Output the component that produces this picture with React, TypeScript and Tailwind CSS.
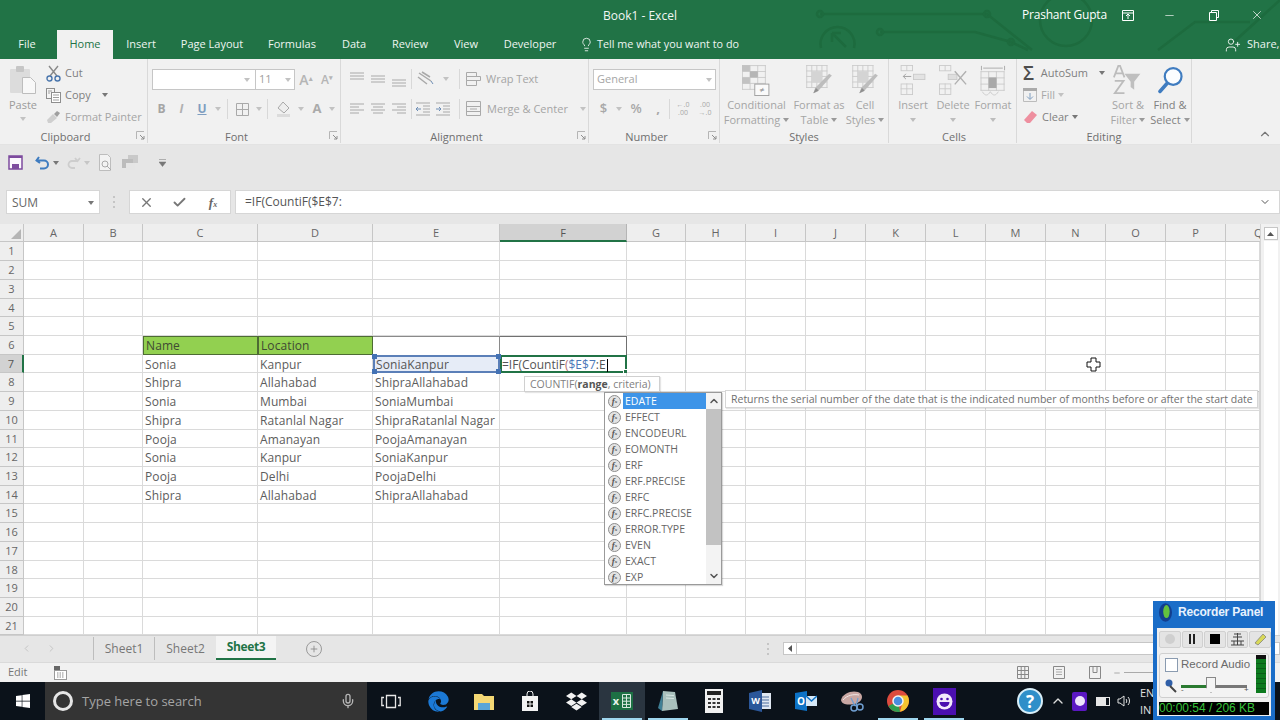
import React from "react";
import { FaWindows, FaEdge, FaDropbox } from "react-icons/fa";
import { Mic, ChevronUp, ChevronDown, ChevronLeft, ChevronRight, Plus, Lightbulb, UserPlus, X, Check, Minus } from "lucide-react";

const G = "#a9a9a9";
const D = "#c9c9c9";

function Caret({ color = "#9a9a9a" }: { color?: string }) {
  return (
    <svg width="6" height="4" viewBox="0 0 6 4" className="shrink-0">
      <path d="M0 0h6L3 4z" fill={color} />
    </svg>
  );
}

function Launcher() {
  return (
    <svg width="9" height="9" viewBox="0 0 9 9" className="absolute right-[2px] bottom-[3px]">
      <path d="M.5 8V.5H8" fill="none" stroke="#b5b5b5" />
      <path d="M4 4l4 4M8 5v3H5" fill="none" stroke="#8e8e8e" />
    </svg>
  );
}

function LinesIcon({ kind }: { kind: "top" | "mid" | "bot" | "left" | "center" | "right" | "outdent" | "indent" }) {
  const rows: Record<string, string> = {
    top: "M2 2h14M2 5h14M2 8h14",
    mid: "M2 5h14M2 8h14M2 11h14",
    bot: "M2 9h14M2 12h14M2 15h14",
    left: "M2 3h14M2 6h9M2 9h14M2 12h9",
    center: "M2 3h14M4 6h10M2 9h14M4 12h10",
    right: "M2 3h14M7 6h9M2 9h14M7 12h9",
    outdent: "M2 2h14M9 5h7M9 8h7M9 11h7M2 14h14",
    indent: "M2 2h14M9 5h7M9 8h7M9 11h7M2 14h14",
  };
  return (
    <svg width="18" height="17" viewBox="0 0 18 17">
      <path d={rows[kind]} stroke={G} fill="none" />
      {kind === "outdent" && <path d="M7 8H2M4 6L2 8l2 2" stroke="#6d8db5" fill="none" />}
      {kind === "indent" && <path d="M2 8h5M5 6l2 2-2 2" stroke="#6d8db5" fill="none" />}
    </svg>
  );
}

function GridIcon({ w, h, cols, rows, color = D }: { w: number; h: number; cols: number; rows: number; color?: string }) {
  const lines = [];
  for (let i = 0; i <= cols; i++) lines.push(<path key={"c" + i} d={`M${0.5 + (i * (w - 1)) / cols} 0V${h}`} stroke={color} />);
  for (let i = 0; i <= rows; i++) lines.push(<path key={"r" + i} d={`M0 ${0.5 + (i * (h - 1)) / rows}H${w}`} stroke={color} />);
  return <>{lines}</>;
}

function CondFormatIcon() {
  return (
    <svg width="30" height="32" viewBox="0 0 34 36">
      <GridIcon w={27} h={28} cols={3} rows={4} />
      <rect x="0" y="0" width="9" height="7" fill="#c2c2c2" />
      <rect x="9" y="7" width="9" height="7" fill="#b5b5b5" />
      <rect x="0" y="14" width="9" height="7" fill="#c2c2c2" />
      <rect x="14.5" y="21.5" width="16" height="13" fill="#fafafa" stroke="#9a9a9a" />
      <text x="22.5" y="32" textAnchor="middle" fontSize="10" fill="#8a8a8a">≠</text>
    </svg>
  );
}

function TableIcon() {
  return (
    <svg width="27" height="30" viewBox="0 0 30 34">
      <GridIcon w={24} h={26} cols={4} rows={4} />
      <rect x="6" y="7" width="12" height="13" fill="#d4d4d4" />
      <path d="M29 12L13 30l-5 2 2-6 16-16z" fill="#bdbdbd" />
      <path d="M8 32l3-6 3 3z" fill="#8f8f8f" />
    </svg>
  );
}

function InsertIcon() {
  return (
    <svg width="26" height="30" viewBox="0 0 28 34">
      <rect x=".5" y=".5" width="13" height="6" fill="none" stroke={D} />
      <path d="M7 .5v6" stroke={D} />
      <rect x=".5" y="21.5" width="13" height="12" fill="none" stroke={D} />
      <path d="M7 21v12M0 27h14" stroke={D} />
      <path d="M12 13H3M6 10l-3 3 3 3" stroke="#9a9a9a" fill="none" />
      <rect x="14.5" y="10.5" width="13" height="6" fill="#e3e3e3" stroke={D} />
    </svg>
  );
}

function DeleteIcon() {
  return (
    <svg width="28" height="30" viewBox="0 0 32 34">
      <rect x=".5" y=".5" width="13" height="6" fill="none" stroke={D} />
      <path d="M7 .5v6" stroke={D} />
      <rect x=".5" y="21.5" width="13" height="12" fill="none" stroke={D} />
      <path d="M7 21v12M0 27h14" stroke={D} />
      <rect x="10.5" y="10.5" width="10" height="6" fill="#dedede" stroke={D} />
      <path d="M18 7l13 15M31 7L18 22" stroke="#b0b0b0" strokeWidth="1.6" />
    </svg>
  );
}

function FormatIcon() {
  return (
    <svg width="26" height="32" viewBox="0 0 28 36">
      <path d="M1 1v5M27 1v5M3 3.500h22" stroke="#a5a5a5" fill="none" />
      <g transform="translate(0 7)">
        <GridIcon w={27} h={22} cols={3} rows={3} />
      </g>
      <rect x="9" y="14" width="9" height="12" fill="#a9a9a9" />
      <path d="M2 30c3 5 6 5 9 0M11 30c3 5 6 5 9 0" stroke={D} fill="none" />
    </svg>
  );
}

function SmallBtn({ label, big, className }: { label: string[]; big: React.ReactNode; className: string }) {
  return (
    <div className={"flex flex-col items-center " + className}>
      <div className="h-[32px] flex items-start justify-center">{big}</div>
      {label.map((l, i) => (
        <div key={i} className="h-[15px] leading-[15px] flex items-center gap-[3px] whitespace-nowrap">
          {l}
          {i === label.length - 1 && label.length === 2 && <Caret />}
        </div>
      ))}
      {label.length === 1 && (
        <div className="h-[15px] flex items-center">
          <Caret color="#bdbdbd" />
        </div>
      )}
    </div>
  );
}

function Sep({ className = "h-[20px]" }: { className?: string }) {
  return <div className={"w-px bg-[#d8d8d8] shrink-0 " + className} />;
}

function Group({ label, className, labelClass = "", launcher, children }: { label: string; className: string; labelClass?: string; launcher?: boolean; children: React.ReactNode }) {
  return (
    <div className={"relative shrink-0 flex flex-col border-r border-[#d9d9d9] mb-[1px] " + className}>
      <div className="flex-1 min-h-0">{children}</div>
      <div className={"h-[12px] leading-[12px] text-center text-[#6f6f6f] " + labelClass}>{label}</div>
      {launcher && <Launcher />}
    </div>
  );
}

function Ribbon() {
  return (
    <div className="h-[86px] bg-[#f1f1f1] flex shrink-0 text-[11px] text-[#9b9b9b] border-b border-[#e3e3e3]">
      <Group label="Clipboard" labelClass="pr-[16px]" launcher className="w-[148px]">
        <div className="flex">
          <div className="w-[46px] shrink-0 pt-[6px] flex flex-col items-center">
            <svg width="28" height="30" viewBox="0 0 28 30">
              <rect x="1" y="4" width="20" height="24" rx="1" fill="#dcdcdc" />
              <rect x="7" y="1" width="8" height="6" rx="1" fill="#c6c6c6" />
              <path d="M13.500 12.500h8l5 5v11h-13z" fill="#f8f8f8" stroke="#bdbdbd" />
            </svg>
            <div className="mt-[2px] leading-[15px]">Paste</div>
            <div className="mt-[5px]"><Caret color="#c2c2c2" /></div>
          </div>
          <div className="flex flex-col text-[#7f7f7f]">
            <div className="h-[22px] mt-[3px] flex items-center gap-[4px]">
              <svg width="15" height="17" viewBox="0 0 15 17">
                <path d="M3 1l8 10M12 1L4 11" stroke="#8a8a8a" strokeWidth="1.4" />
                <circle cx="3.500" cy="13.500" r="2.500" fill="none" stroke="#4a76ad" strokeWidth="1.400" />
                <circle cx="11.500" cy="13.500" r="2.500" fill="none" stroke="#4a76ad" strokeWidth="1.400" />
              </svg>
              Cut
            </div>
            <div className="h-[22px] flex items-center gap-[4px]">
              <svg width="15" height="15" viewBox="0 0 15 15">
                <rect x=".5" y=".5" width="8" height="10" fill="#f5f5f5" stroke="#8e8e8e" />
                <rect x="5.500" y="4.500" width="9" height="10" fill="#fff" stroke="#8e8e8e" />
                <path d="M7 7h6M7 9.500h6M7 12h6M2 3h4M2 5h2" stroke="#9e9e9e" />
              </svg>
              Copy
              <span className="ml-[7px]"><Caret color="#777" /></span>
            </div>
            <div className="h-[22px] flex items-center gap-[4px] text-[#a5a5a5] whitespace-nowrap">
              <svg width="15" height="14" viewBox="0 0 15 14">
                <path d="M1 10l6-6 4 4-6 5H2z" fill="#cfcfcf" />
                <path d="M8 4l3-3 3 2-3 4z" fill="#9f9f9f" />
              </svg>
              Format Painter
            </div>
          </div>
        </div>
      </Group>

      <Group label="Font" labelClass="pr-[19px]" launcher className="w-[193px] pl-[4px]">
        <div className="pt-[10px]">
          <div className="flex items-center h-[21px]">
            <div className="w-[104px] h-full bg-white border border-[#c6c6c6] flex items-center justify-end pr-[5px]">
              <Caret color="#c2c2c2" />
            </div>
            <div className="w-[39px] h-full bg-white border border-l-0 border-[#c6c6c6] flex items-center justify-between px-[3px] text-[#a0a0a0]">
              11
              <Caret color="#c2c2c2" />
            </div>
            <div className="w-[20px] ml-[1px] text-center text-[14px] font-semibold text-[#b5b5b5] leading-none">A<sup className="text-[7px]">▴</sup></div>
            <div className="w-[22px] text-center text-[12px] font-semibold text-[#b5b5b5] leading-none">A<sup className="text-[7px]">▾</sup></div>
          </div>
          <div className="flex items-center h-[20px] mt-[9px] text-[12px] text-[#a5a5a5]">
            <div className="w-[19px] text-center font-bold">B</div>
            <div className="w-[21px] text-center italic font-bold text-[#b0b0b0]">I</div>
            <div className="w-[20px] text-center underline font-bold text-[#7f9ec0] decoration-[#7f9ec0]">U</div>
            <div className="w-[12px] flex justify-center"><Caret color="#c2c2c2" /></div>
            <div className="w-[6px] flex justify-center"><Sep /></div>
            <div className="w-[24px] flex justify-center">
              <svg width="13" height="13" viewBox="0 0 13 13"><path d="M.5.500h12v12H.5zM6.500.500v12M.5 6.500h12" fill="none" stroke={G} /></svg>
            </div>
            <div className="w-[10px] flex justify-center"><Caret color="#c2c2c2" /></div>
            <div className="w-[6px] flex justify-center"><Sep /></div>
            <div className="w-[26px] flex justify-center">
              <svg width="15" height="16" viewBox="0 0 15 16"><path d="M7 1l6 6-5 5-6-5z" fill="#eee" stroke={G} /><rect x="1" y="13" width="13" height="3" fill="#dcdcdc" /></svg>
            </div>
            <div className="w-[10px] flex justify-center"><Caret color="#c2c2c2" /></div>
            <div className="w-[22px] text-center font-bold text-[13px] text-[#aaaaaa]">A</div>
            <div className="w-[8px] flex justify-center"><Caret color="#c2c2c2" /></div>
          </div>
        </div>
      </Group>

      <Group label="Alignment" labelClass="pr-[21px]" launcher className="w-[248px] pl-[5px]">
        <div className="pt-[9px]">
          <div className="flex items-center h-[22px]">
            <div className="w-[21px] flex justify-center"><LinesIcon kind="top" /></div>
            <div className="w-[21px] flex justify-center"><LinesIcon kind="mid" /></div>
            <div className="w-[21px] flex justify-center"><LinesIcon kind="bot" /></div>
            <div className="w-[4px] flex justify-center"><Sep /></div>
            <div className="w-[26px] flex justify-center">
              <svg width="18" height="16" viewBox="0 0 18 16"><path d="M2 2l12 8M1 6l9 7M5 1l8 5" stroke={G} strokeWidth="1.500" fill="none" /><path d="M14 10l2 3" stroke="#6d8db5" /></svg>
            </div>
            <div className="w-[14px] flex justify-center"><Caret color="#c2c2c2" /></div>
            <div className="w-[12px] flex justify-center"><Sep /></div>
            <div className="flex items-center gap-[3px] ml-[1px] text-[11px] text-[#a5a5a5] whitespace-nowrap">
              <svg width="17" height="15" viewBox="0 0 17 15"><path d="M.5.500h10v4H.5zM.5 4.500h14v4H.5zM.5 8.500h10v5H.5z" fill="none" stroke={G} /></svg>
              Wrap Text
            </div>
          </div>
          <div className="flex items-center h-[20px] mt-[9px]">
            <div className="w-[21px] flex justify-center"><LinesIcon kind="left" /></div>
            <div className="w-[21px] flex justify-center"><LinesIcon kind="center" /></div>
            <div className="w-[21px] flex justify-center"><LinesIcon kind="right" /></div>
            <div className="w-[4px] flex justify-center"><Sep /></div>
            <div className="w-[20px] flex justify-center"><LinesIcon kind="outdent" /></div>
            <div className="w-[20px] flex justify-center"><LinesIcon kind="indent" /></div>
            <div className="w-[12px] flex justify-center"><Sep /></div>
            <div className="flex items-center gap-[5px] ml-[1px] text-[11px] text-[#a5a5a5] whitespace-nowrap">
              <svg width="16" height="16" viewBox="0 0 16 16"><path d="M.5.500h14v14H.5zM.5 5.500h14M.5 10.500h14M4 8h7" fill="none" stroke={G} /></svg>
              Merge &amp; Center
              <span className="ml-[7px]"><Caret color="#c2c2c2" /></span>
            </div>
          </div>
        </div>
      </Group>

      <Group label="Number" labelClass="pr-[19px]" launcher className="w-[131px] pl-[4px]">
        <div className="pt-[10px]">
          <div className="w-[123px] h-[21px] bg-white border border-[#c6c6c6] flex items-center justify-between px-[3px] text-[#a5a5a5]">
            General
            <Caret color="#c2c2c2" />
          </div>
          <div className="flex items-center h-[20px] mt-[9px] text-[#a8a8a8]">
            <div className="w-[21px] text-center text-[13px] font-semibold">$</div>
            <div className="w-[9px] flex justify-center"><Caret color="#c2c2c2" /></div>
            <div className="w-[26px] text-center text-[13px] font-semibold">%</div>
            <div className="w-[18px] text-center text-[13px] font-bold">,</div>
            <div className="w-[4px] flex justify-center"><Sep /></div>
            <div className="w-[24px] text-center text-[7px] leading-[8px]">←.0<br />.00</div>
            <div className="w-[20px] text-center text-[7px] leading-[8px]">.00<br />→.0</div>
          </div>
        </div>
      </Group>

      <Group label="Styles" className="w-[169px]">
        <div className="pt-[6px] flex text-[#a5a5a5]">
          <SmallBtn className="w-[73px]" label={["Conditional", "Formatting"]} big={<CondFormatIcon />} />
          <SmallBtn className="w-[52px]" label={["Format as", "Table"]} big={<TableIcon />} />
          <SmallBtn className="w-[40px]" label={["Cell", "Styles"]} big={<TableIcon />} />
        </div>
      </Group>

      <Group label="Cells" className="w-[128px] pl-[3px]">
        <div className="pt-[6px] flex text-[#a5a5a5]">
          <SmallBtn className="w-[42px]" label={["Insert"]} big={<InsertIcon />} />
          <SmallBtn className="w-[38px]" label={["Delete"]} big={<DeleteIcon />} />
          <SmallBtn className="w-[42px]" label={["Format"]} big={<FormatIcon />} />
        </div>
      </Group>

      <Group label="Editing" labelClass="pr-[6px]" className="w-[175px] pl-[6px]">
        <div className="flex">
          <div className="w-[82px] shrink-0 flex flex-col text-[#7f7f7f]">
            <div className="h-[22px] mt-[3px] flex items-center gap-[3px] whitespace-nowrap">
              <span className="text-[19px] leading-none w-[16px] text-[#4d4d4d] font-semibold">Σ</span>
              AutoSum
              <span className="ml-[8px]"><Caret color="#777" /></span>
            </div>
            <div className="h-[22px] flex items-center gap-[3px] text-[#a8a8a8]">
              <svg width="15" height="15" viewBox="0 0 15 15"><path d="M.5.500h13v13H.5z" fill="none" stroke="#bcbcbc" /><rect x="0" y="0" width="14" height="3" fill="#aaa" /><path d="M7 5v6M4 8.500l3 3 3-3" fill="none" stroke="#7f9ec0" /></svg>
              Fill
              <Caret color="#c2c2c2" />
            </div>
            <div className="h-[22px] flex items-center gap-[3px] whitespace-nowrap">
              <svg width="15" height="14" viewBox="0 0 15 14"><path d="M9 1l5 4-7 8H4L1 10z" fill="#ee8f9f" /></svg>
              <span className="ml-[1px]">Clear</span>
              <Caret color="#777" />
            </div>
          </div>
          <div className="pt-[6px] w-[46px]">
            <SmallBtn className="w-[46px] text-[#a5a5a5]" label={["Sort &", "Filter"]} big={
              <svg width="30" height="30" viewBox="0 0 34 34">
                <path d="M1 14L6 1h2l5 13M3.500 9.500h7M2 18h10L2 32h11" fill="none" stroke="#bcbcbc" strokeWidth="2" />
                <path d="M13 10h18l-7 9v9l-4-3v-6z" fill="#bfbfbf" />
              </svg>
            } />
          </div>
          <div className="pt-[6px] w-[38px]">
            <SmallBtn className="w-[38px] text-[#808080]" label={["Find &", "Select"]} big={
              <svg width="27" height="30" viewBox="0 0 30 34">
                <circle cx="18" cy="13" r="9.500" fill="#fbfdff" stroke="#3f7cc0" strokeWidth="2.500" />
                <path d="M11 21L3 30" stroke="#3f7cc0" strokeWidth="4" strokeLinecap="round" />
              </svg>
            } />
          </div>
        </div>
      </Group>

      <div className="flex-1 flex items-end justify-end pr-[8px] pb-[3px]">
        <ChevronUp size={14} className="text-[#777]" />
      </div>
    </div>
  );
}

function QuickAccess() {
  return (
    <div className="h-[35px] shrink-0 flex items-center pl-[8px]">
      <svg width="15" height="15" viewBox="0 0 15 15">
        <path d="M1 1h13v13H1z" fill="#fbf8fd" stroke="#7d4b9e" strokeWidth="1.500" />
        <rect x="1" y="1" width="13" height="2" fill="#7d4b9e" />
        <rect x="4" y="9" width="7" height="5" fill="#7d4b9e" />
      </svg>
      <svg width="15" height="15" viewBox="0 0 15 15" className="ml-[12px]">
        <path d="M4 2L1.500 5.500 5 8M2 5.500h7a4 4 0 0 1 0 8H5" fill="none" stroke="#3f7cc0" strokeWidth="2" />
      </svg>
      <span className="ml-[3px]"><Caret color="#777" /></span>
      <svg width="14" height="13" viewBox="0 0 14 13" className="ml-[8px]">
        <path d="M13 2L10.500 5 8 2M10.500 5H5a3.500 3.500 0 0 0 0 7h3" fill="none" stroke="#cdcdcd" strokeWidth="1.800" />
      </svg>
      <span className="ml-[3px]"><Caret color="#c6c6c6" /></span>
      <svg width="15" height="17" viewBox="0 0 15 17" className="ml-[8px]">
        <path d="M1.500.500h8l3 3v13h-11z" fill="#f3f3f3" stroke="#bdbdbd" />
        <circle cx="7" cy="10" r="3" fill="none" stroke="#aaa" />
        <path d="M9 12l4 4" stroke="#aaa" />
      </svg>
      <svg width="19" height="17" viewBox="0 0 19 17" className="ml-[8px]">
        <rect x="7" y="1" width="10" height="8" fill="#c9c9c9" />
        <rect x="1" y="5" width="11" height="9" fill="#bcbcbc" />
        <rect x="5" y="9" width="9" height="7" fill="#e5e5e5" />
      </svg>
      <svg width="7" height="8" viewBox="0 0 7 8" className="ml-[19px]">
        <path d="M0 .5h7M0 3h7L3.500 7.500z" fill="#777" stroke="#777" strokeWidth=".5" />
      </svg>
    </div>
  );
}

function FormulaBar() {
  return (
    <div className="mt-[10px] h-[24px] shrink-0 flex items-stretch pl-[6px] text-[12px] text-[#666]">
      <div className="w-[94px] bg-white border border-[#d6d6d6] flex items-center justify-between pl-[5px] pr-[5px] pt-px">
        SUM
        <Caret color="#777" />
      </div>
      <div className="w-[29px] flex items-center justify-center">
        <svg width="3" height="12" viewBox="0 0 3 12"><path d="M1 0v2M1 5v2M1 10v2" stroke="#bbb" strokeWidth="1.500" /></svg>
      </div>
      <div className="w-[102px] bg-white border border-[#d6d6d6] flex items-center">
        <div className="w-[32px] flex justify-center"><X size={15} strokeWidth={2.2} className="text-[#777]" /></div>
        <div className="w-[34px] flex justify-center"><Check size={15} strokeWidth={3} className="text-[#777]" /></div>
        <div className="w-[34px] text-center italic font-bold text-[#666] [font-family:'Liberation_Serif',serif] text-[13px] leading-none">f<span className="text-[8px]">x</span></div>
      </div>
      <div className="flex-1 ml-[4px] bg-white border border-[#d6d6d6] flex items-center justify-between pl-[9px] pr-[8px] text-[#555] text-[12px]">
        =IF(CountiF($E$7:
        <ChevronDown size={12} className="text-[#555]" />
      </div>
    </div>
  );
}

const letters = ["A", "B", "C", "D", "E", "F", "G", "H", "I", "J", "K", "L", "M", "N", "O", "P", "Q"];
const rows = Array.from({ length: 21 }, (_, i) => i + 1);
const sheet: Record<number, string[]> = {
  6: ["Name", "Location"],
  7: ["Sonia", "Kanpur", "SoniaKanpur"],
  8: ["Shipra", "Allahabad", "ShipraAllahabad"],
  9: ["Sonia", "Mumbai", "SoniaMumbai"],
  10: ["Shipra", "Ratanlal Nagar", "ShipraRatanlal Nagar"],
  11: ["Pooja", "Amanayan", "PoojaAmanayan"],
  12: ["Sonia", "Kanpur", "SoniaKanpur"],
  13: ["Pooja", "Delhi", "PoojaDelhi"],
  14: ["Shipra", "Allahabad", "ShipraAllahabad"],
};

function Handle({ className }: { className: string }) {
  return <div className={"absolute w-[5px] h-[5px] bg-[#4472b4] " + className} />;
}

function Cell({ r, c }: { r: number; c: number }) {
  const base = "relative border-r border-b border-[#dadada] min-w-0 text-[12px] tracking-[0.1px] leading-[18px] pt-px pl-[2px] whitespace-nowrap";
  const value = sheet[r]?.[c - 2];
  if (r === 6 && (c === 2 || c === 3)) {
    return <div className="bg-[#92d050] border border-[#4d6b33] pl-[2px] text-[12px] tracking-[0.1px] leading-[18px] text-[#3f4a33]">{value}</div>;
  }
  if (r === 6 && c === 4) return <div className="border-t border-r border-[#8a8a8a] border-b-[#4472b4]" />;
  if (r === 6 && c === 5) return <div className="border-t border-r border-[#707070]" />;
  if (r === 7 && c === 4) {
    return (
      <div className="relative z-10 bg-[#e6ecf7] border-2 border-[#5b7fb8] text-[12px] tracking-[0.1px] leading-[16px] pl-px text-[#555] whitespace-nowrap">
        {value}
        <Handle className="-left-[3px] -top-[3px]" />
        <Handle className="-right-[3px] -top-[3px]" />
        <Handle className="-left-[3px] -bottom-[3px]" />
        <Handle className="-right-[3px] -bottom-[3px]" />
      </div>
    );
  }
  if (r === 7 && c === 5) {
    return (
      <div className="relative bg-white border-2 border-[#217346] text-[12px] leading-[16px] text-[#555] whitespace-nowrap overflow-visible">
        =IF(CountiF<span className="text-[#b5726e]">(</span><span className="text-[#4a78b8]">$E$7</span>:E
        <span className="inline-block w-px h-[13px] bg-black align-middle ml-px" />
        <div className="absolute -right-[3px] -bottom-[3px] w-[5px] h-[5px] bg-[#217346] border border-white" />
      </div>
    );
  }
  return <div className={base + " text-[#5c5c5c]"}>{value}</div>;
}

function Sheet() {
  return (
    <div className="flex-1 min-h-0 flex overflow-hidden bg-white [font-family:'Open_Sans',sans-serif]">
      <div className="w-[1260px] grid grid-cols-[24px_60px_59px_115px_115px_127px_127px_59px_60px_60px_60px_60px_60px_60px_60px_60px_60px_34px] grid-rows-[18.4px_repeat(21,18.72px)]">
        <div className="bg-[#eeeeee] border-r border-b border-[#c6c6c6] flex items-end justify-end p-[2px]">
          <svg width="10" height="10" viewBox="0 0 10 10"><path d="M10 0v10H0z" fill="#b5b5b5" /></svg>
        </div>
        {letters.map((l) =>
          l === "F" ? (
            <div key={l} className="bg-[#d2d2d2] border-r border-b-2 border-b-[#217346] border-r-[#b5b5b5] text-center text-[11px] leading-[18px] text-[#555]">{l}</div>
          ) : l === "Q" ? (
            <div key={l} className="bg-[#eeeeee] border-b border-[#c6c6c6] pl-[28px] overflow-hidden text-[11px] leading-[18px] text-[#666]">{l}</div>
          ) : (
            <div key={l} className="bg-[#eeeeee] border-r border-b border-[#c6c6c6] text-center text-[11px] leading-[18px] text-[#666]">{l}</div>
          )
        )}
        {rows.map((r) => (
          <React.Fragment key={r}>
            {r === 7 ? (
              <div className="bg-[#d2d2d2] border-r-2 border-r-[#217346] border-b border-[#c6c6c6] text-center text-[11px] leading-[18px] text-[#555]">{r}</div>
            ) : (
              <div className="bg-[#eeeeee] border-r border-b border-[#c6c6c6] text-center text-[11px] leading-[18px] text-[#666]">{r}</div>
            )}
            {letters.map((l, i) => (
              <Cell key={l} r={r} c={i} />
            ))}
          </React.Fragment>
        ))}
      </div>
      <div className="w-[20px] bg-[#f1f1f1] border-l border-[#d6d6d6] flex flex-col items-center pt-[3px]">
        <div className="w-[14px] h-[13px] bg-white border border-[#c6c6c6] flex items-center justify-center">
          <svg width="7" height="4" viewBox="0 0 7 4"><path d="M3.500 0L7 4H0z" fill="#555" /></svg>
        </div>
        <div className="w-[14px] flex-1 bg-white mt-[1px]" />
      </div>
    </div>
  );
}

function SheetTabs() {
  return (
    <div className="h-[27px] shrink-0 bg-[#e6e6e6] flex items-start text-[12px] text-[#777] border-t border-[#cfcfcf]">
      <div className="w-[94px] h-[23px] flex items-center border-r border-[#bdbdbd] mt-[1px] pl-[21px] gap-[14px]">
        <ChevronLeft size={11} className="text-[#c2c2c2]" />
        <ChevronRight size={11} className="text-[#c2c2c2]" />
      </div>
      <div className="w-[61px] h-[23px] mt-[1px] flex items-center justify-center border-r border-[#bdbdbd]">Sheet1</div>
      <div className="w-[61px] h-[23px] mt-[1px] flex items-center justify-center">Sheet2</div>
      <div className="w-[60px] h-[24px] bg-[#f4f4f4] border-b-2 border-[#217346] flex items-center justify-center font-bold text-[#217346] tracking-[-0.4px]">Sheet3</div>
      <div className="w-[16px] h-[16px] ml-[30px] mt-[5px] rounded-full border border-[#9a9a9a] flex items-center justify-center">
        <Plus size={10} className="text-[#888]" />
      </div>
      <div className="ml-[445px] mt-[7px]">
        <svg width="3" height="12" viewBox="0 0 3 12"><path d="M1 0v2M1 5v2M1 10v2" stroke="#bbb" strokeWidth="1.500" /></svg>
      </div>
      <div className="ml-[13px] mt-[6px] flex-1 h-[13px] bg-white border border-[#c6c6c6] flex">
        <div className="w-[13px] border-r border-[#c6c6c6] flex items-center justify-center">
          <svg width="4" height="7" viewBox="0 0 4 7"><path d="M0 3.500L4 0v7z" fill="#555" /></svg>
        </div>
      </div>
    </div>
  );
}

function StatusBar() {
  return (
    <div className="h-[20px] shrink-0 bg-[#f1f1f1] flex items-center border-t border-[#dadada] pl-[8px] text-[11px] text-[#777]">
      <div className="w-[46px]">Edit</div>
      <svg width="13" height="14" viewBox="0 0 13 14">
        <rect x=".5" y="4.500" width="12" height="9" fill="#fff" stroke="#999" />
        <rect x="0" y="0" width="6" height="4" fill="#666" />
        <path d="M3 7h7M3 9h7M3 11h7" stroke="#888" strokeDasharray="1.500 1" />
      </svg>
      <div className="ml-[950px] flex items-center">
        <svg width="12" height="13" viewBox="0 0 12 13"><path d="M.5.500h11v12H.5zM4.200.500v12M7.800.500v12M.5 4.500h11M.5 8.500h11" fill="none" stroke="#888" /></svg>
        <svg width="12" height="13" viewBox="0 0 12 13" className="ml-[24px]"><path d="M.5.500h11v12H.5z" fill="none" stroke="#888" /><path d="M3 3.500h6M3 6h6M3 8.500h6" stroke="#aaa" /></svg>
        <svg width="12" height="13" viewBox="0 0 12 13" className="ml-[24px]"><path d="M.5.500h11v12H.5zM4 .500v6h4v-6" fill="none" stroke="#888" /></svg>
        <Minus size={8} className="ml-[12px] text-[#888]" />
        <div className="w-[30px] h-px bg-[#aaa] ml-[3px]" />
      </div>
    </div>
  );
}

function TaskSlot({ running, active, children }: { running?: boolean; active?: boolean; children: React.ReactNode }) {
  return (
    <div className={"relative w-[46px] h-full flex items-center justify-center shrink-0 " + (active ? "bg-[#2a3540]" : "")}>
      {children}
      {running && <div className="absolute bottom-0 left-[3px] right-[3px] h-[2px] bg-[#9fd6ee]" />}
    </div>
  );
}

function Taskbar() {
  return (
    <div className="h-[38px] shrink-0 bg-[#0b121a] flex items-stretch text-white">
      <div className="w-[45px] flex items-center justify-center">
        <FaWindows size={16} className="text-white" />
      </div>
      <div className="w-[322px] bg-[#343434] flex items-center pl-[8px] pr-[11px]">
        <div className="w-[20px] h-[20px] rounded-full border-[3px] border-[#e6e6e6]" />
        <div className="ml-[9px] text-[13px] text-[#a5a5a5] flex-1 leading-none">Type here to search</div>
        <Mic size={16} className="text-[#b5b5b5]" />
      </div>
      <div className="w-[48px] flex items-center justify-center">
        <svg width="20" height="15" viewBox="0 0 20 15"><path d="M5.500 1.500h9v12h-9zM3 3.500H.8v8H3M17 3.500h2.200v8H17" fill="none" stroke="#e6e6e6" strokeWidth="1.300" /></svg>
      </div>
      <TaskSlot><FaEdge size={21} className="text-[#1b79d6]" /></TaskSlot>
      <TaskSlot>
        <svg width="20" height="17" viewBox="0 0 20 17"><path d="M0 1h8l2 2h10v14H0z" fill="#f4d774" /><rect x="4" y="10" width="12" height="7" fill="#5aa5d8" /></svg>
      </TaskSlot>
      <TaskSlot>
        <svg width="18" height="20" viewBox="0 0 18 20"><path d="M1 5h16v15H1z" fill="#f2f2f2" /><path d="M6 6V3a3 3 0 0 1 6 0v3" fill="none" stroke="#f2f2f2" /><path d="M6 10h2.500v2.500H6zM9.500 10H12v2.500H9.500zM6 13.500h2.500V16H6zM9.500 13.500H12V16H9.500z" fill="#111" /></svg>
      </TaskSlot>
      <TaskSlot><FaDropbox size={21} className="text-[#f2f2f2]" /></TaskSlot>
      <TaskSlot running active>
        <svg width="22" height="18" viewBox="0 0 22 18">
          <rect x="0" y="0" width="22" height="18" fill="#1d7044" />
          <text x="5" y="13" fontSize="11" fontWeight="700" fill="#e8f3ec" textAnchor="middle">x</text>
          <path d="M11.500 2.500h8v13h-8zM11.500 6h8M11.500 9.200h8M11.500 12.400h8M15.500 2.500v13" fill="none" stroke="#d8e8de" />
        </svg>
      </TaskSlot>
      <TaskSlot running>
        <svg width="22" height="24" viewBox="0 0 22 24">
          <path d="M6 2l12 1 3 17-16 2z" fill="#a9c0bd" />
          <path d="M6 2L1 19l4 3z" fill="#3f7f95" />
          <path d="M9 6l8 .6M9 9l8 .6" stroke="#d7e6e4" />
        </svg>
      </TaskSlot>
      <TaskSlot>
        <svg width="18" height="24" viewBox="0 0 18 24">
          <rect width="18" height="24" fill="#f0f0f0" />
          <rect x="2" y="2" width="14" height="4" fill="#222" />
          <path d="M3 9h3v2H3zM7.500 9h3v2h-3zM12 9h3v2h-3zM3 13h3v2H3zM7.500 13h3v2h-3zM12 13h3v2h-3zM3 17h3v2H3zM7.500 17h3v2h-3zM12 17h3v2h-3z" fill="#333" />
        </svg>
      </TaskSlot>
      <TaskSlot>
        <svg width="22" height="22" viewBox="0 0 22 22">
          <rect x="7" y="3" width="15" height="16" fill="#dfe7f2" />
          <path d="M13 7h7M13 10h7M13 13h7M13 16h7" stroke="#4f6f9f" />
          <path d="M0 3l13-3v22L0 19z" fill="#2b579a" />
          <text x="6.500" y="14" fontSize="9" fontWeight="700" fill="#fff" textAnchor="middle">W</text>
        </svg>
      </TaskSlot>
      <TaskSlot>
        <svg width="22" height="20" viewBox="0 0 22 20">
          <path d="M0 2l12-2v20L0 18z" fill="#0d72c6" />
          <text x="6" y="13.500" fontSize="10" fontWeight="700" fill="#fff" textAnchor="middle">O</text>
          <rect x="11" y="5" width="11" height="10" fill="#d6e8f7" />
          <path d="M11 5l5.500 5L22 5" fill="none" stroke="#0d72c6" strokeWidth="1.500" />
        </svg>
      </TaskSlot>
      <TaskSlot>
        <svg width="24" height="22" viewBox="0 0 24 22">
          <path d="M1 10C3 2 16-1 21 4c3 4-1 9-7 10-6 1-12 1-13-4z" fill="#c9a7a3" />
          <path d="M3 10C7 5 14 4 19 5" stroke="#f0e6e4" fill="none" />
          <circle cx="14" cy="18" r="3" fill="none" stroke="#6f9ed0" strokeWidth="1.500" />
          <circle cx="20" cy="17" r="3" fill="none" stroke="#6f9ed0" strokeWidth="1.500" />
          <path d="M11 8l4 8M18 8l-2 8" stroke="#6f9ed0" strokeWidth="1.300" />
        </svg>
      </TaskSlot>
      <TaskSlot running>
        <svg width="22" height="22" viewBox="0 0 22 22">
          <circle cx="11" cy="11" r="11" fill="#dd4b3e" />
          <path d="M11 11L1.500 16A11 11 0 0 0 13 21.800z" fill="#2f9e4f" />
          <path d="M11 5.500h9.500A11 11 0 0 1 13 21.800L16 11z" fill="#f4c430" />
          <circle cx="11" cy="11" r="5" fill="#4a8de0" stroke="#f3f3f3" strokeWidth="1.500" />
        </svg>
      </TaskSlot>
      <TaskSlot running>
        <svg width="23" height="27" viewBox="0 0 23 27">
          <rect width="23" height="27" fill="#4b0fb0" />
          <circle cx="11.500" cy="13.500" r="8" fill="#f2e9fb" />
          <circle cx="8.500" cy="11" r="1.300" fill="#4b0fb0" />
          <circle cx="14.500" cy="11" r="1.300" fill="#4b0fb0" />
          <path d="M6.500 14h10a5 5 0 0 1-10 0z" fill="#4b0fb0" />
        </svg>
      </TaskSlot>
      <div className="flex-1 flex items-center pl-[50px]">
        <div className="relative w-[26px] h-[26px] rounded-full bg-[#2f8fc9] border-2 border-[#d8eef8] flex items-center justify-center text-[17px] font-bold text-white leading-none">
          ?
        </div>
        <ChevronUp size={16} className="ml-[7px] text-[#dcdcdc]" />
        <div className="ml-[6px] w-[15px] h-[19px] bg-[#5b18c2] rounded-[2px] flex items-center justify-center">
          <div className="w-[10px] h-[10px] rounded-full bg-[#efe4fb]" />
        </div>
        <div className="ml-[9px] w-[14px] h-[9px] border border-[#e6e6e6] flex">
          <div className="w-[9px] bg-[#e6e6e6]" />
        </div>
        <svg width="14" height="14" viewBox="0 0 14 14" className="ml-[7px]">
          <path d="M1 5h2l4-3v10L3 9H1zM9 5c1 1 1 3 0 4M11 3c2 2 2 6 0 8" fill="none" stroke="#e0e0e0" />
        </svg>
        <div className="ml-[9px] text-[11px] leading-[17px] text-[#e0e0e0]">EN<br />IN</div>
      </div>
    </div>
  );
}

function Suggestions() {
  const items = ["EDATE", "EFFECT", "ENCODEURL", "EOMONTH", "ERF", "ERF.PRECISE", "ERFC", "ERFC.PRECISE", "ERROR.TYPE", "EVEN", "EXACT", "EXP"];
  return (
    <div className="absolute left-[604px] top-[392px] w-[118px] h-[193px] bg-white border border-[#9a9a9a] flex z-20 text-[10.500px] text-[#666] [font-family:'Open_Sans',sans-serif] shadow-[1px_1px_1px_rgba(0,0,0,0.15)]">
      <div className="w-[101px] flex flex-col">
        {items.map((f, i) => (
          <div key={f} className="h-[16px] flex items-center">
            <div className="w-[18px] flex justify-center shrink-0 pl-px">
              <div className="w-[13px] h-[13px] rounded-full border border-[#8d8d8d] bg-[#e3e3e3] flex items-center justify-center italic text-[9px] font-bold text-[#555] leading-none [font-family:'Liberation_Serif',serif]">f<span className="text-[5px]">x</span></div>
            </div>
            <div className={i === 0 ? "flex-1 h-full bg-[#3d94e8] text-white flex items-center pl-[2px] pt-px" : "flex-1 pl-[2px] pt-px"}>{f}</div>
          </div>
        ))}
      </div>
      <div className="flex-1 flex flex-col items-center bg-[#f3f3f3]">
        <div className="h-[16px] flex items-center"><ChevronUp size={12} strokeWidth={3} className="text-[#555]" /></div>
        <div className="w-full h-[136px] bg-[#c2c2c2]" />
        <div className="flex-1" />
        <div className="h-[16px] flex items-center"><ChevronDown size={12} strokeWidth={3} className="text-[#555]" /></div>
      </div>
    </div>
  );
}

function RecorderPanel() {
  return (
    <div className="absolute left-[1153px] top-[601px] w-[122px] h-[119px] bg-[#1a6dc8] flex flex-col z-30 px-[4px] pb-[4px] [font-family:'Liberation_Sans',sans-serif]">
      <div className="h-[27px] flex items-center gap-[6px] shrink-0 pl-[2px] pb-[5px]">
        <svg width="13" height="19" viewBox="0 0 14 20" className="shrink-0">
          <ellipse cx="7" cy="10" rx="7" ry="10" fill="#123f8f" />
          <ellipse cx="8" cy="9" rx="3.500" ry="7" fill="#62c13f" />
        </svg>
        <span className="text-[12px] font-bold text-[#e8f2fd] tracking-[-0.2px] whitespace-nowrap">Recorder Panel</span>
      </div>
      <div className="flex-1 bg-[#efefef] flex flex-col px-[2px] pt-[2px] pb-[1px]">
        <div className="flex items-center gap-px h-[18px]">
          {[0, 1, 2, 3, 4].map((b) => (
            <div key={b} className="w-[21.600px] h-[17px] bg-[#e4e4e4] border border-[#d0d0d0] rounded-[2px] flex items-center justify-center shrink-0">
              {b === 0 && <div className="w-[10px] h-[10px] rounded-full bg-[#cfcfcf]" />}
              {b === 1 && <div className="w-[6px] h-[10px] border-x-2 border-[#222]" />}
              {b === 2 && <div className="w-[10px] h-[10px] bg-black" />}
              {b === 3 && (
                <svg width="15" height="13" viewBox="0 0 15 13"><path d="M1 12h13M1 8h13M3 4h9M7.500 0v12M4 8v4M11 8v4M4 1h7" stroke="#444" fill="none" /></svg>
              )}
              {b === 4 && (
                <svg width="14" height="13" viewBox="0 0 14 13"><path d="M2 10l8-9 3 3-8 8z" fill="#d8d858" stroke="#777" strokeWidth=".7" /></svg>
              )}
            </div>
          ))}
        </div>
        <div className="mt-[5px] h-[45px] shrink-0 border border-[#cfcfcf] rounded-[3px] bg-[#f3f3f3] flex pl-[5px] pr-[1px] pt-[1px]">
          <div className="flex-1 min-w-0">
            <div className="flex items-center gap-[3px] h-[20px]">
              <div className="w-[13px] h-[14px] bg-white border border-[#8a9bb0] shrink-0" />
              <span className="text-[11.500px] text-[#6a6a6a] whitespace-nowrap">Record Audio</span>
            </div>
            <div className="relative h-[20px] flex items-center mt-[1px]">
              <svg width="13" height="15" viewBox="0 0 13 15" className="shrink-0">
                <circle cx="4" cy="4" r="3.500" fill="#2f5fa8" />
                <path d="M5 7l6 6" stroke="#444" strokeWidth="2" />
              </svg>
              <div className="ml-[3px] w-[66px] h-[3px] bg-[#777] flex">
                <div className="w-[28px] bg-[#2a7a30]" />
              </div>
              <div className="absolute left-[41px] top-[1px] w-[10px] h-[16px] bg-[#f4f4f4] border border-[#888] [clip-path:polygon(0_0,100%_0,100%_65%,50%_100%,0_65%)]" />
              <span className="absolute left-[16px] top-[10px] text-[8px] leading-[8px] text-[#555]">-</span>
              <span className="absolute left-[79px] top-[10px] text-[8px] leading-[8px] text-[#555]">+</span>
            </div>
          </div>
          <div className="w-[10px] h-[38px] bg-[repeating-linear-gradient(to_bottom,#0d7a1f_0,#0d7a1f_4px,#0a5c18_4px,#0a5c18_5px)] border-t-[4px] border-[#111] shrink-0 mr-[1px]" />
        </div>
        <div className="mt-[4px] h-[13px] bg-black text-[#37c43a] text-[12px] leading-[13px] whitespace-nowrap overflow-hidden">00:00:54 / 206 KB</div>
      </div>
    </div>
  );
}

function Header() {
  return (
    <div className="relative h-[59px] bg-[#217346] shrink-0 text-white overflow-hidden">
      <svg width="480" height="59" viewBox="0 0 480 59" className="absolute left-[800px] top-0">
        <g fill="none" stroke="#1d6b3e" strokeWidth="2.500">
          <path d="M20 14H187L232 50" />
          <circle cx="20" cy="14" r="3" />
          <circle cx="187" cy="14" r="3" />
          <path d="M21 48A17 17 0 1 1 54 48" />
          <path d="M32 33l14 14M32 33h9M32 33v9" />
          <path d="M80 32h95l36 10 17 8" />
          <circle cx="80" cy="32" r="3" />
          <circle cx="211" cy="42" r="3" />
          <circle cx="266" cy="20" r="26" />
          <path d="M358 50l37-28h55" />
          <path d="M425 50l55-50" />
        </g>
      </svg>
      <div className="relative h-[30px] flex items-center text-[12px]">
        <div className="absolute left-[603px] top-[7px] text-[#f2f7f4] whitespace-nowrap">Book1 - Excel</div>
        <div className="ml-[1022px] w-[100px] whitespace-nowrap tracking-[-0.2px]">Prashant Gupta</div>
        <svg width="12" height="11" viewBox="0 0 12 11"><path d="M.5.500h11v10H.5zM.5 3h11M6 9V4.500M4 6l2-2 2 2" fill="none" stroke="#fff" /></svg>
        <Minus size={13} strokeWidth={1.200} className="ml-[29px]" />
        <svg width="10" height="11" viewBox="0 0 10 11" className="ml-[33px]"><path d="M2.500 2.500V.5h7v7h-2M.5 2.500h7v8h-7z" fill="none" stroke="#fff" /></svg>
        <X size={14} strokeWidth={1.200} className="ml-[31px]" />
      </div>
      <div className="relative h-[29px] flex items-end text-[11px] text-[#eef5f1]">
        <div className="w-[54px] h-full flex items-center justify-center mr-[3px]">File</div>
        <div className="w-[56px] h-full bg-[#f1f1f1] text-[#217346] flex items-center justify-center">Home</div>
        <div className="w-[56px] h-full flex items-center justify-center">Insert</div>
        <div className="w-[86px] h-full flex items-center justify-center whitespace-nowrap">Page Layout</div>
        <div className="w-[74px] h-full flex items-center justify-center">Formulas</div>
        <div className="w-[50px] h-full flex items-center justify-center">Data</div>
        <div className="w-[62px] h-full flex items-center justify-center">Review</div>
        <div className="w-[50px] h-full flex items-center justify-center">View</div>
        <div className="w-[78px] h-full flex items-center justify-center">Developer</div>
        <div className="h-full flex items-center gap-[3px] ml-[10px] whitespace-nowrap text-[10.800px]">
          <Lightbulb size={15} strokeWidth={1.400} />
          Tell me what you want to do
        </div>
        <div className="absolute right-0 top-0 h-full flex items-center gap-[6px] w-[55px] whitespace-nowrap overflow-hidden">
          <UserPlus size={16} strokeWidth={1.400} className="shrink-0" />
          Share,
        </div>
      </div>
    </div>
  );
}

export default function App() {
  return (
    <div className="relative w-[1280px] h-[720px] overflow-hidden flex flex-col bg-[#e6e6e6] [font-family:'Open_Sans',sans-serif]">
      <Header />
      <Ribbon />
      <QuickAccess />
      <FormulaBar />
      <div className="h-[10px] shrink-0" />
      <Sheet />
      <SheetTabs />
      <StatusBar />
      <Taskbar />

      {/* popups sitting on top of the sheet */}
      <div className="absolute left-[524px] top-[376px] w-[136px] h-[16px] bg-white border border-[#d0d0d0] shadow-[1px_1px_1px_rgba(0,0,0,0.1)] z-20 text-[10.500px] leading-[14px] text-[#808080] pl-[5px] whitespace-nowrap">
        COUNTIF(<b className="text-[#555]">range</b>, criteria)
      </div>
      <Suggestions />
      <div className="absolute left-[725px] top-[390px] w-[533px] h-[18px] bg-white border border-[#d6d6d6] shadow-[1px_1px_1px_rgba(0,0,0,0.1)] z-20 text-[10.500px] leading-[16px] text-[#6f6f6f] pl-[5px] whitespace-nowrap overflow-hidden">
        Returns the serial number of the date that is the indicated number of months before or after the start date
      </div>
      {/* mouse pointer */}
      <svg width="15" height="15" viewBox="0 0 15 15" className="absolute left-[1086px] top-[357px] z-20">
        <path d="M5 1h5v4h4v5h-4v4H5v-4H1V5h4z" fill="#fff" stroke="#111" />
      </svg>
      <RecorderPanel />
    </div>
  );
}
